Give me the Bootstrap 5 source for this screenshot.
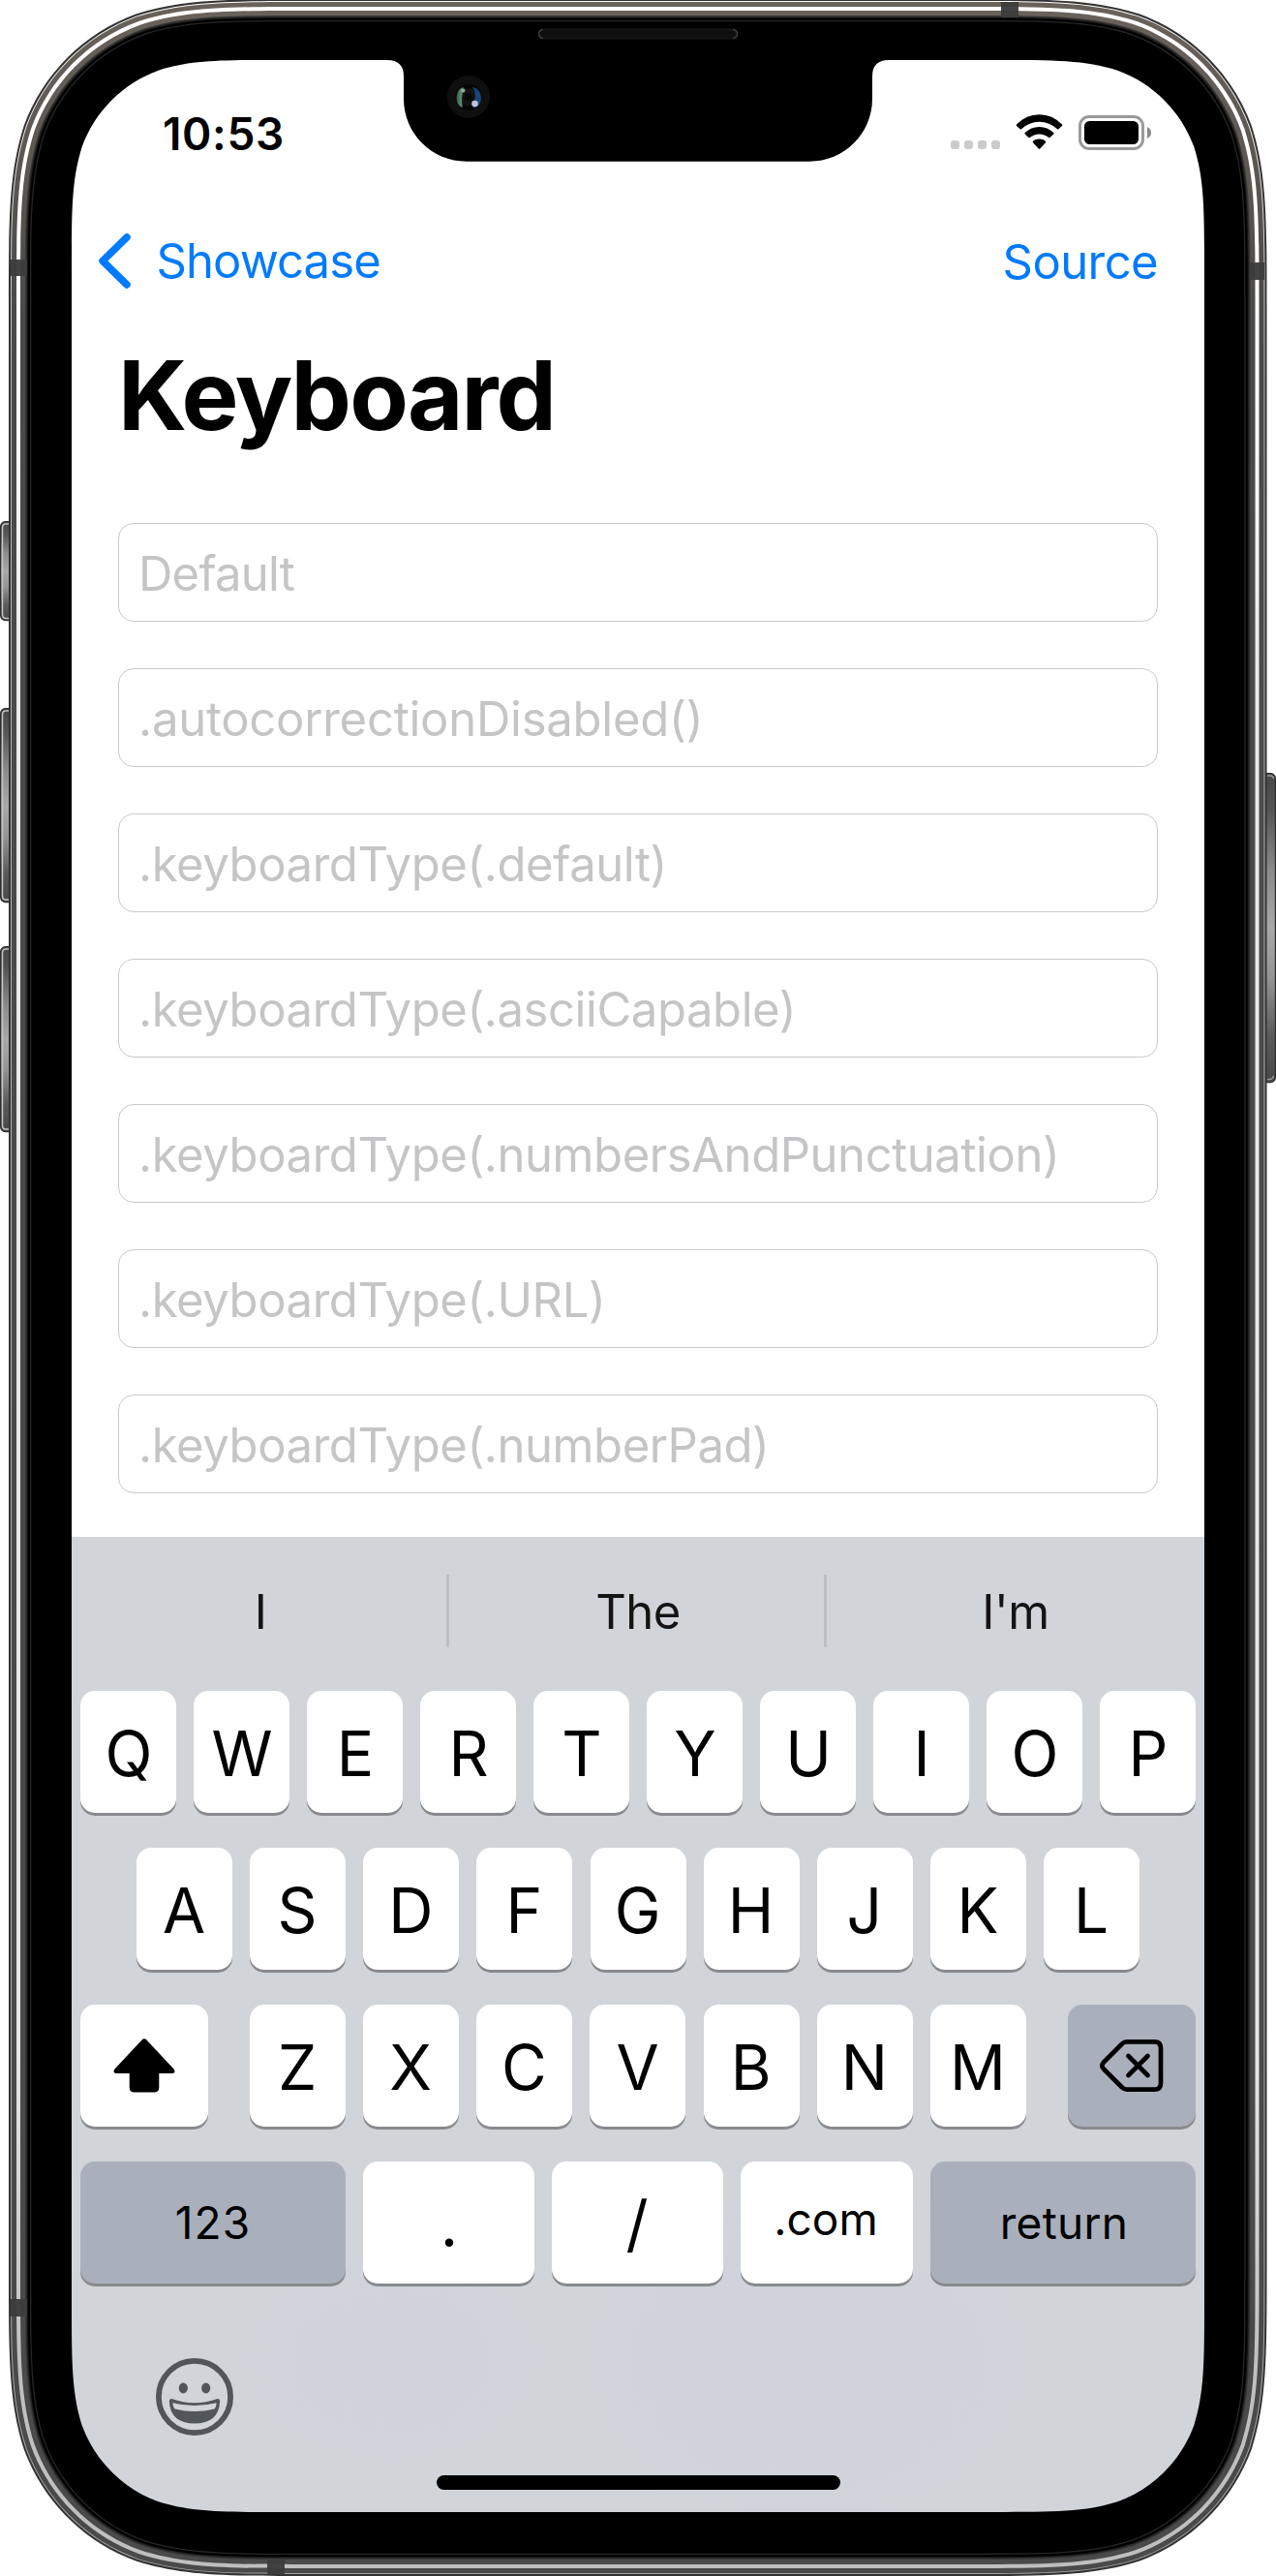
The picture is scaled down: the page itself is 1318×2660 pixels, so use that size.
<!DOCTYPE html>
<html lang="en">
<head>
<meta charset="utf-8">
<meta name="viewport" content="width=device-width, initial-scale=1">
<title>Keyboard</title>
<link href="https://cdn.jsdelivr.net/npm/bootstrap@5.3.0/dist/css/bootstrap.min.css" rel="stylesheet">
<style>
  body { background: #fff; font-family: Inter, "Liberation Sans", sans-serif; color: #000; }
  .phone { width: 1318px; height: 2660px; padding: 62px 74px 66px; }
  .bezel { position: absolute; left: 0; top: 0; pointer-events: none; z-index: 5; }
  .screen { height: 2532px; background: #fff; }

  .status-bar { height: 141px; padding: 48px 55px 0 94px; }
  .clock { font-size: 46px; font-weight: 600; line-height: 56px; letter-spacing: .65px; }
  .status-icons { gap: 16px; height: 45px; }

  .nav-bar { height: 132px; padding: 0 48px 0 27px; color: #007aff; font-size: 49px; }
  .nav-bar a { color: #007aff; text-decoration: none; letter-spacing: -.9px; line-height: 60px; }
  .nav-back { gap: 26.5px; padding-top: 1px; }
  .nav-bar .nav-source { padding-top: 3px; letter-spacing: -.6px; }

  .large-title { height: 156px; padding: 13px 48px 0; font-size: 99px; font-weight: 700; line-height: 120px; letter-spacing: -1.9px; margin: 0; }

  .fields { padding: 49px 48px 0; gap: 48px; height: 1096px; }
  .field { height: 102px; padding: 2px 20px 0; border: 1px solid #c9c9cb; border-radius: 16px; font-size: 49px; line-height: 60px; letter-spacing: -.43px; }
  .field::placeholder { color: #c5c5c7; opacity: 1; }
  .field-tight { letter-spacing: -.75px; }
  .field-loose { letter-spacing: -.24px; }

  .keyboard { height: 1007px; background:
      radial-gradient(ellipse 260px 190px at 760px 850px, #d0d3dc 40%, transparent 100%),
      radial-gradient(ellipse 190px 130px at 330px 850px, #d0d3dc 10%, transparent 100%),
      #d1d4d9; }
  .suggestions { height: 159px; padding: 39px 0 45px; font-size: 49px; color: #141414; }
  .suggestions > div { flex: 0 0 390px; padding: 2px 0 0 3px; border-right: 3px solid #bbbec2; line-height: 60px; letter-spacing: -.5px; }
  .suggestions > div:last-child { border-right-color: transparent; }

  .keys { gap: 36px; padding: 0 9px; }
  .key-row-home { padding: 0 58px; }
  .letters-low { width: 802px; }
  .bottom-mid { width: 568px; gap: 18px; }
  .key { width: 99px; height: 126px; border: 0; border-radius: 15px; padding: 3px 0 0 1px; background: #fff; color: #000; font-size: 64px; line-height: 1; box-shadow: 0 3px 0 #898a8d; display: flex; align-items: center; justify-content: center; }
  .key-row-home .key, .letters-low .key { padding: 3px 1px 0 0; }
  .key-shift, .key-delete { width: 132px; padding: 0 1px 0 0; }
  .key-wide { width: 274px; font-size: 46px; padding: 0; }
  .key-flex { flex: 1 1 0; }
  .key-slash { padding: 1px 1px 0 0; }
  .key-gray { background: #aab0bb; }
  .key-com { font-size: 46px; padding: 0 2px 9px 0; }
  .key-num { letter-spacing: 1.1px; }
  .key-ret { letter-spacing: .3px; padding-left: 2px; }

  .emoji-row { padding: 77px 0 0 87px; }
  .home-indicator { width: 417px; height: 15px; border-radius: 8px; background: #000; margin-top: 41px; }
</style>
</head>
<body>
<div class="phone position-relative">

  <main class="screen d-flex flex-column">
    <header class="status-bar d-flex justify-content-between align-items-start">
      <div class="clock">10:53</div>
      <div class="status-icons d-flex align-items-end">
        <svg width="51" height="10" viewBox="0 0 51 10" fill="#cbcbcb">
          <rect x="0" y="0" width="9" height="9" rx="3"/><rect x="14" y="0" width="9" height="9" rx="3"/><rect x="28" y="0" width="9" height="9" rx="3"/><rect x="42" y="0" width="9" height="9" rx="3"/>
        </svg>
        <svg width="49" height="37" viewBox="0 0 49 37">
          <path d="M1 10.5Q11 .2 24.500 .2Q38 .2 48 10.500Q48.700 11.200 48 11.900L44.400 15.200Q43.700 15.900 43 15.200Q35 7.700 24.500 7.700Q14 7.700 6 15.200Q5.300 15.900 4.600 15.200L1 11.900Q.3 11.200 1 10.500Z"/>
          <path d="M9.700 19Q16 13 24.500 13Q33 13 39.300 19Q40 19.700 39.300 20.400L35.600 24Q34.900 24.700 34.200 24Q30 20.500 24.500 20.500Q19 20.500 14.800 24Q14.100 24.700 13.400 24L9.700 20.400Q9 19.700 9.700 19Z"/>
          <path d="M18 27.800Q20.500 25.500 24.500 25.500Q28.500 25.500 31 27.800Q31.700 28.500 31 29.200L25.200 35.400Q24.500 36.100 23.800 35.400L18 29.200Q17.300 28.500 18 27.800Z"/>
        </svg>
        <svg width="75" height="36" viewBox="0 0 75 36">
          <rect x="1.500" y="1.500" width="65" height="33" rx="9.500" fill="none" stroke="#9a9a9a" stroke-width="3"/>
          <rect x="6" y="6" width="56" height="24" rx="5.500"/>
          <path d="M71 12Q75 14 75 18T71 24Z" fill="#8a8a8a"/>
        </svg>
      </div>
    </header>

    <nav class="nav-bar d-flex justify-content-between align-items-center">
      <a href="#" class="nav-back d-flex align-items-center">
        <svg width="34" height="58" viewBox="0 0 34 58" fill="none" stroke="#007aff" stroke-width="7.500" stroke-linecap="round" stroke-linejoin="round"><path d="M30 4L5 28.500L30 53"/></svg>
        <span>Showcase</span>
      </a>
      <a href="#" class="nav-source">Source</a>
    </nav>

    <h1 class="large-title">Keyboard</h1>

    <form class="fields d-flex flex-column">
      <input class="form-control field field-tight" type="text" placeholder="Default">
      <input class="form-control field field-loose" type="text" placeholder=".autocorrectionDisabled()">
      <input class="form-control field" type="text" placeholder=".keyboardType(.default)">
      <input class="form-control field" type="text" placeholder=".keyboardType(.asciiCapable)">
      <input class="form-control field" type="text" placeholder=".keyboardType(.numbersAndPunctuation)">
      <input class="form-control field" type="text" placeholder=".keyboardType(.URL)">
      <input class="form-control field" type="text" placeholder=".keyboardType(.numberPad)">
    </form>

    <section class="keyboard">
      <div class="suggestions d-flex">
        <div class="d-flex justify-content-center align-items-center">I</div>
        <div class="d-flex justify-content-center align-items-center">The</div>
        <div class="d-flex justify-content-center align-items-center">I'm</div>
      </div>

      <div class="keys d-flex flex-column">
        <div class="d-flex justify-content-between">
          <button class="key">Q</button><button class="key">W</button><button class="key">E</button><button class="key">R</button><button class="key">T</button><button class="key">Y</button><button class="key">U</button><button class="key">I</button><button class="key">O</button><button class="key">P</button>
        </div>
        <div class="key-row-home d-flex justify-content-between">
          <button class="key">A</button><button class="key">S</button><button class="key">D</button><button class="key">F</button><button class="key">G</button><button class="key">H</button><button class="key">J</button><button class="key">K</button><button class="key">L</button>
        </div>
        <div class="d-flex justify-content-between">
          <button class="key key-shift" aria-label="shift">
            <svg width="64" height="56" viewBox="0 0 64 56"><path d="M29.300 1.700Q32 -1 34.700 1.700L62.500 31.500Q64 33.500 63.200 35Q62.500 36 60.500 36H47.300V50.500Q47.300 55.500 42.300 55.500H21.700Q16.700 55.500 16.700 50.500V36H3.500Q1.500 36 .8 35Q0 33.500 1.500 31.500Z"/></svg>
          </button>
          <div class="letters-low d-flex justify-content-between">
            <button class="key">Z</button><button class="key">X</button><button class="key">C</button><button class="key">V</button><button class="key">B</button><button class="key">N</button><button class="key">M</button>
          </div>
          <button class="key key-delete key-gray" aria-label="delete">
            <svg width="66" height="54" viewBox="0 0 66 54" fill="none" stroke="#000" stroke-width="4.700" stroke-linecap="round" stroke-linejoin="round"><path d="M28 2.400H56.500Q63 2.400 63 9V45Q63 51.600 56.500 51.600H28Q25 51.600 23 49.500L4 30.500Q.8 27 4 23.500L23 4.500Q25 2.400 28 2.400Z"/><path d="M29.500 17L49.500 37M49.500 17L29.500 37"/></svg>
          </button>
        </div>
        <div class="d-flex justify-content-between">
          <button class="key key-wide key-gray key-num">123</button>
          <div class="bottom-mid d-flex">
            <button class="key key-flex">.</button><button class="key key-flex key-slash">/</button><button class="key key-flex key-com">.com</button>
          </div>
          <button class="key key-wide key-gray key-ret">return</button>
        </div>
      </div>

      <div class="emoji-row">
        <svg class="d-block" width="80" height="80" viewBox="0 0 80 80" fill="#51565d">
          <circle cx="40" cy="40" r="37.100" fill="none" stroke="#51565d" stroke-width="5.800"/>
          <ellipse cx="28.300" cy="31" rx="4.600" ry="5.400"/><ellipse cx="51.700" cy="31" rx="4.600" ry="5.400"/>
          <path fill-rule="evenodd" d="M16.300 42Q40 50.500 63.700 42Q66.300 41.800 66.200 44.500Q65 67.500 40 67.500Q15 67.500 13.800 44.500Q13.700 41.800 16.300 42ZM17.300 46.300Q17.500 50 19.500 52.400Q40 57.500 60.500 52.400Q62.500 50 62.700 46.300Q40 51.800 17.300 46.300Z"/>
        </svg>
      </div>
      <div class="home-indicator mx-auto"></div>
    </section>
  </main>

  <svg class="bezel" width="1318" height="2660" viewBox="0 0 1318 2660" aria-hidden="true">
    <defs>
      <linearGradient id="steel" x1="0" y1="0" x2="0" y2="1"><stop offset="0" stop-color="#68625b"/><stop offset=".06" stop-color="#5c5751"/><stop offset=".12" stop-color="#4a4a49"/><stop offset="1" stop-color="#4a4a4a"/></linearGradient>
      <linearGradient id="shine" x1="0" y1="0" x2="0" y2="1"><stop offset="0" stop-color="#fff"/><stop offset=".15" stop-color="#fff"/><stop offset=".25" stop-color="#ebebeb"/><stop offset=".8" stop-color="#e6e6e6"/><stop offset=".92" stop-color="#c0c0c0"/><stop offset="1" stop-color="#bfbfbf"/></linearGradient>
      <linearGradient id="hair" x1="0" y1="0" x2="0" y2="1"><stop offset="0" stop-color="#fff"/><stop offset=".14" stop-color="#b4b8b8"/><stop offset="1" stop-color="#a2a5a5"/></linearGradient>
      <linearGradient id="knob" x1="0" y1="0" x2="0" y2="1"><stop offset="0" stop-color="#474747"/><stop offset=".12" stop-color="#555"/><stop offset=".32" stop-color="#8c8c8c"/><stop offset=".5" stop-color="#a8a8a8"/><stop offset=".66" stop-color="#959595"/><stop offset=".85" stop-color="#5a5a5a"/><stop offset="1" stop-color="#484848"/></linearGradient>
      <linearGradient id="lensGreen" x1="0" y1="0" x2="1" y2="0"><stop offset="0" stop-color="#2f5a45"/><stop offset=".6" stop-color="#5f8c76"/><stop offset="1" stop-color="#223a2e"/></linearGradient>
    </defs>

    <!-- side buttons -->
    <g stroke="#2e2e2e" stroke-width="1.200" fill="url(#knob)">
      <rect x=".6" y="538.600" width="16" height="102" rx="5"/>
      <rect x=".6" y="731.600" width="16" height="200" rx="5"/>
      <rect x=".6" y="977.600" width="16" height="191" rx="5"/>
      <rect x="1300" y="798.600" width="17.400" height="319" rx="5"/>
    </g>
    <g fill="none" stroke="#c4c4c4" stroke-width="1.500">
      <path d="M9 541H6Q2.500 541 2.500 545V634Q2.500 638.500 6 638.500H9M9 734H6Q2.500 734 2.500 738V925Q2.500 929 6 929H9M9 980H6Q2.500 980 2.500 984V1162Q2.500 1166 6 1166H9" />
      <path d="M1309 801H1312Q1315 801 1315.500 804M1309 1114.500H1312Q1315 1114 1315.500 1111" stroke="#999"/>
    </g>

    <g id="rings" fill-rule="evenodd"></g>

    <!-- antenna bands -->
    <g fill="#3c3c3c" fill-opacity=".96">
      <rect x="11" y="268" width="17" height="17"/>
      <rect x="1291" y="271" width="15" height="18"/>
      <rect x="1034" y="2" width="18" height="16"/>
      <rect x="11" y="2374" width="17" height="18"/>
      <rect x="276" y="2642" width="18" height="16"/>
    </g>

    <!-- notch -->
    <path d="M400 61V62Q417 62 417 79V102C417 138 446 166.700 482 166.700H836C872 166.700 901 138 901 102V79Q901 62 918 62V61Z"/>
    <rect x="556.500" y="30" width="205" height="10" rx="5" fill="#0f0f0f" stroke="#1b1b1b" stroke-width="1"/>
    <path d="M561 30.500Q556.500 31 556.500 35T561 39.500M757 30.500Q761.500 31 761.500 35T757 39.500" fill="none" stroke="#3c3c3c" stroke-width="1.500"/>
    <circle cx="484" cy="100" r="22" fill="#0f0f0f"/>
    <circle cx="484" cy="100.500" r="13.500" fill="#050506"/>
    <circle cx="484" cy="100.500" r="9" fill="#141214"/>
    <circle cx="484" cy="100.500" r="4" fill="#070707"/>
    <path d="M478 90Q471.500 93 471.500 101T478 111Q475.500 101 479.500 91Z" fill="url(#lensGreen)"/>
    <path d="M488 89.500Q497 93 497 101T490 112Q486 109 489.500 105Q493 98 488 89.500Z" fill="#174679"/>
    <circle cx="478.300" cy="93.500" r="2.100" fill="#93ad9f"/>
    <circle cx="490.500" cy="107" r="3.300" fill="#c3c1dc"/>
  </svg>
</div>

<script src="https://cdn.jsdelivr.net/npm/bootstrap@5.3.0/dist/js/bootstrap.bundle.min.js"></script>
<script>
  // Continuous-curvature rounded rectangle, corner radius r.
  function smoothRect(x0, y0, x1, y1, r) {
    const corner = [[1.52866, 0], [1.08849, 0], [0.86841, 0], [0.63149, 0.07491], [0.37282, 0.16906], [0.16906, 0.37282], [0.07491, 0.63149], [0, 0.86841], [0, 1.08849], [0, 1.52866]];
    const place = (cx, cy, sx, sy, pts) => pts.map(p => (cx + sx * p[0] * r).toFixed(2) + ' ' + (cy + sy * p[1] * r).toFixed(2));
    const rev = corner.slice().reverse();
    const sides = [place(x1, y0, -1, 1, corner), place(x1, y1, -1, -1, rev), place(x0, y1, 1, -1, corner), place(x0, y0, 1, 1, rev)];
    return sides.map((p, i) => (i ? 'L' : 'M') + p[0] + 'C' + p.slice(1, 4).join(' ') + 'C' + p.slice(4, 7).join(' ') + 'C' + p.slice(7).join(' ')).join('') + 'Z';
  }
  const box = i => smoothRect(9 + i, -1 + i, 1308.5 - i, 2660 - i, 208 - i);
  const opening = smoothRect(74, 62, 1244, 2594, 142);
  // Inset from the outer edge and fill of every metal layer; the last one is the black glass around the screen.
  const layers = [[0, '#333'], [2, 'url(#hair)'], [3, 'url(#steel)'], [8, 'url(#shine)'], [12, 'url(#steel)'], [17, '#3a3937'], [18, '#2a2a29'], [19, '#111'], [20, '#000'], [22, '#262626'], [23.3, '#000']];
  document.getElementById('rings').innerHTML = layers.map((l, n) =>
    '<path fill="' + l[1] + '" d="' + box(l[0]) + (n === layers.length - 1 ? opening : box(40)) + '"/>').join('');
</script>
</body>
</html>
